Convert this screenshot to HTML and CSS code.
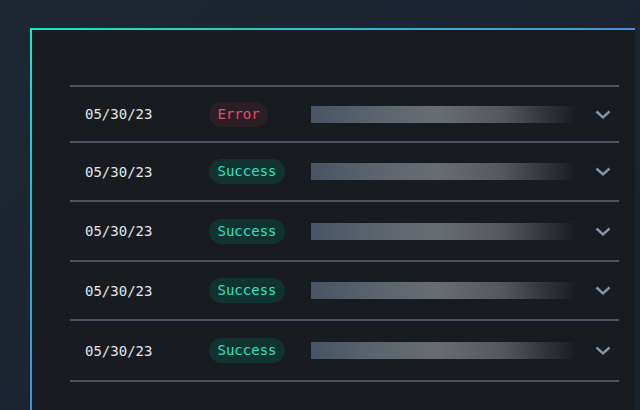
FILE: index.html
```html
<!DOCTYPE html>
<html>
<head>
<meta charset="utf-8">
<link rel="stylesheet" href="styles.css">
</head>
<body>
<div class="panel">
  <div class="list">
    <div class="row">
      <span class="date">05/30/23</span>
      <span class="cell"><span class="badge badge-error">Error</span></span>
      <span class="bar"></span>
      <span class="chev"><svg width="16" height="9" viewBox="0 0 16 9"><polyline points="1.5,1.5 8,7.3 14.5,1.5" fill="none" stroke="#8595a9" stroke-width="2.4"/></svg></span>
    </div>
    <div class="row">
      <span class="date">05/30/23</span>
      <span class="cell"><span class="badge badge-success">Success</span></span>
      <span class="bar"></span>
      <span class="chev"><svg width="16" height="9" viewBox="0 0 16 9"><polyline points="1.5,1.5 8,7.3 14.5,1.5" fill="none" stroke="#8595a9" stroke-width="2.4"/></svg></span>
    </div>
    <div class="row">
      <span class="date">05/30/23</span>
      <span class="cell"><span class="badge badge-success">Success</span></span>
      <span class="bar"></span>
      <span class="chev"><svg width="16" height="9" viewBox="0 0 16 9"><polyline points="1.5,1.5 8,7.3 14.5,1.5" fill="none" stroke="#8595a9" stroke-width="2.4"/></svg></span>
    </div>
    <div class="row">
      <span class="date">05/30/23</span>
      <span class="cell"><span class="badge badge-success">Success</span></span>
      <span class="bar"></span>
      <span class="chev"><svg width="16" height="9" viewBox="0 0 16 9"><polyline points="1.5,1.5 8,7.3 14.5,1.5" fill="none" stroke="#8595a9" stroke-width="2.4"/></svg></span>
    </div>
    <div class="row">
      <span class="date">05/30/23</span>
      <span class="cell"><span class="badge badge-success">Success</span></span>
      <span class="bar"></span>
      <span class="chev"><svg width="16" height="9" viewBox="0 0 16 9"><polyline points="1.5,1.5 8,7.3 14.5,1.5" fill="none" stroke="#8595a9" stroke-width="2.4"/></svg></span>
    </div>
  </div>
</div>
</body>
</html>
```
FILE: styles.css
```css
html, body {
  margin: 0;
  padding: 0;
  height: 410px;
  overflow: hidden;
}
body {
  background: linear-gradient(135deg, #1d2731 0%, #1b2430 50%, #1a222c 100%);
  font-family: "DejaVu Sans Mono", "Liberation Mono", monospace;
  font-size: 14px;
}
.panel {
  margin: 28px 5px 0 30px;
  height: 382px;
  box-sizing: border-box;
  padding: 57px 16px 0 40px;
  background:
    linear-gradient(to right, #16e8c6 0%, #2ec6d2 40%, #4b8fd4 100%) top left / 100% 2px no-repeat,
    linear-gradient(to bottom, #16e8c6 0%, #2cb6da 45%, #3f8fe0 100%) top left / 2px 100% no-repeat,
    #181c20;
}
.list {
  border-top: 2px solid #4a5362;
}
.row {
  display: grid;
  grid-template-columns: 124px 102px 264px 1fr;
  align-items: center;
  padding: 0 8px 0 15px;
  border-bottom: 2px solid #4a5362;
  height: 57px;
}
.row:nth-child(1) { height: 54px; }
.row:nth-child(3) { height: 58px; }
.row:nth-child(5) { height: 59px; }
.date {
  color: #e4e6e8;
  line-height: 18px;
}
.cell {
  display: flex;
}
.badge {
  display: inline-block;
  height: 25px;
  line-height: 25px;
  padding: 0 8.5px;
  border-radius: 13px;
}
.badge-error {
  color: #e24a6e;
  background: #2b1f25;
}
.badge-success {
  color: #2ee3c4;
  background: #113330;
}
.bar {
  height: 17px;
  background: linear-gradient(90deg, #485464 0%, #5c646d 25%, #686d72 48%, #55595d 72%, #2e3135 90%, #1a1d21 100%);
}
.chev {
  justify-self: end;
  display: flex;
}
```
